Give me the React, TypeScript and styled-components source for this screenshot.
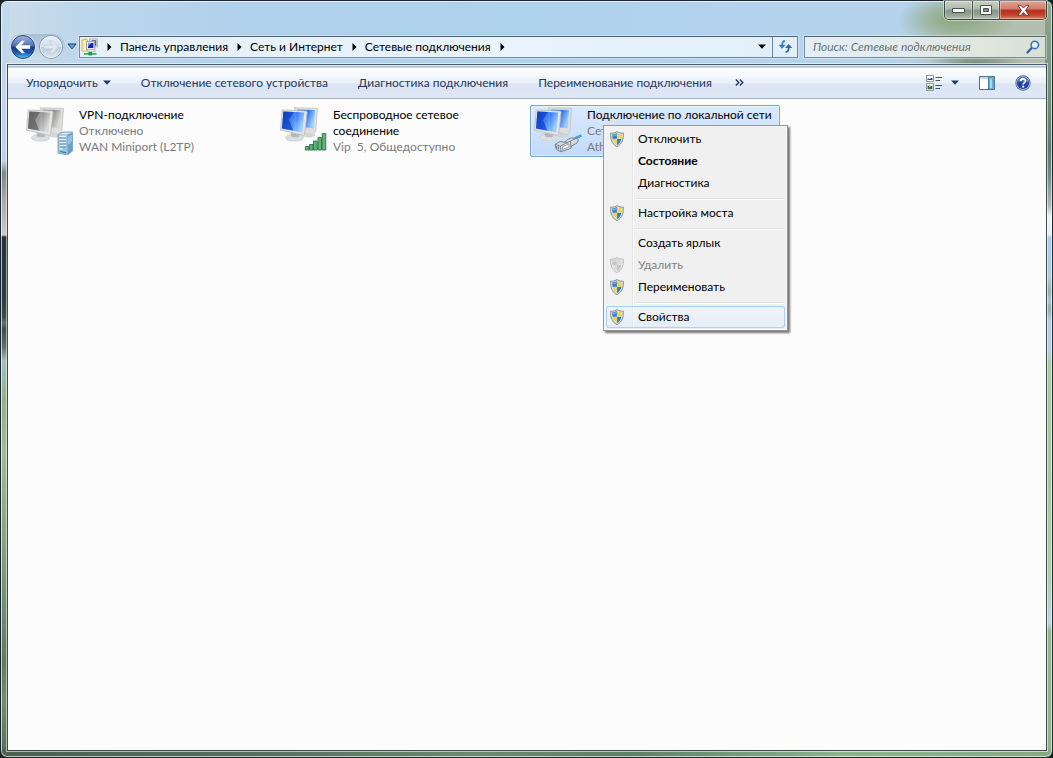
import React from 'react';
import styled, { createGlobalStyle, css } from 'styled-components';

const GlobalStyle = createGlobalStyle`
  * { box-sizing: border-box; }
  body {
    margin: 0;
    background: #1a2620;
    font-family: Lato, 'Open Sans', sans-serif;
    font-size: 12px;
    line-height: 16px;
    color: #000;
  }
  button, input { font: inherit; color: inherit; }
  button { margin: 0; padding: 0; border: 0; background: none; white-space: nowrap; }
  svg { display: block; flex: none; }
`;

/* ---------- window frame ---------- */

const Frame = styled.div`
  display: flex;
  flex-direction: column;
  min-height: 100vh;
  padding: 0 5px 6px 6px;
  border: 1px solid #1b2631;
  border-radius: 7px;
  box-shadow: inset 0 0 0 1px rgba(255, 255, 255, 0.65);
  background:
    linear-gradient(90deg, #4a6152, #55705f 25%, #6b8a70 45%, #5f8068 60%, #8fb48c 80%, #86a982) left bottom / 100% 8px no-repeat,
    linear-gradient(180deg, #c3d9ec 0, #bcd3ea 160px, #7c8b86 172px, #a9a9aa 200px, #cbc8c9 234px, #25333a 236px, #2c3c3f 300px,
      #3b4d49 316px, #5c7268 322px, #3a4d45 328px, #5a7268 346px, #a3c1bd 360px, #8fb28c 400px, #9dbd93 450px, #7f9f7c 560px,
      #5f7b64 660px, #6f8f74 700px, #536f5b 100%) left top / 8px 100% no-repeat,
    linear-gradient(180deg, #8fa791 0, #6f8f74 100px, #5f7b68 150px, #758b80 175px, #b0b9b8 205px, #eef3f5 215px, #e4f0f7 234px,
      #a9cbe6 236px, #accce4 275px, #8fb5a4 290px, #a5c8d4 300px, #8aaea6 308px, #b2cfe3 320px, #b0cfe3 350px, #a5cba9 362px,
      #a2c99c 480px, #a8cfae 580px, #b5d6dc 622px, #8fb98a 630px, #8cb487 100%) right top / 7px 100% no-repeat,
    radial-gradient(ellipse 50px 20px at calc(100% - 76px) 66px, rgba(91, 116, 101, 0.8), rgba(91, 116, 101, 0) 100%) left top / 100% 64px no-repeat,
    radial-gradient(ellipse 60px 26px at calc(100% - 95px) 18px, #8fab88 20%, rgba(151, 181, 146, 0) 100%) left top / 100% 64px no-repeat,
    radial-gradient(ellipse 150px 80px at calc(100% - 10px) 44px, #b3bfae 45%, rgba(175, 195, 183, 0) 100%) left top / 100% 64px no-repeat,
    linear-gradient(90deg, #c9dcea 0, #bcd6ec 90px, #b0d1ec 240px, #add2ec 520px, #b4d3ee 760px, #b5d3ea 100%);
`;

const TitleBar = styled.header`
  display: flex;
  justify-content: flex-end;
  height: 34px;
`;

const Caption = styled.div`
  display: flex;
  height: 19px;
  border: 1px solid #3b4541;
  border-top: 0;
  border-radius: 0 0 5px 5px;
  overflow: hidden;
  box-shadow: 0 0 0 1px rgba(255, 255, 255, 0.45);
`;

const CaptionButton = styled.button<{ $close?: boolean }>`
  display: flex;
  align-items: center;
  justify-content: center;
  width: ${(p) => (p.$close ? 47 : 27)}px;
  box-shadow: inset 0 0 0 1px rgba(255, 255, 255, 0.35);
  background: ${(p) =>
    p.$close
      ? 'linear-gradient(#dfa593 0, #d27a68 45%, #b52f1f 50%, #c23e29 75%, #dd7e5c 100%)'
      : 'linear-gradient(#c9d2c6 0, #acb8aa 45%, #86948a 50%, #93a192 75%, #b6c3b4 100%)'};
  & + & { border-left: 1px solid #4b5650; }
`;

const NavRow = styled.nav`
  display: flex;
  align-items: center;
  height: 23px;
  padding: 0 1px 0 2px;
`;

const History = styled.div`
  display: flex;
  align-items: center;
  gap: 2px;
  height: 26px;
  padding: 0 1px;
  border-radius: 13px;
  background: linear-gradient(rgba(150, 172, 194, 0.6), rgba(225, 237, 248, 0.3));
`;

const RoundButton = styled.button`
  width: 26px;
  height: 26px;
`;

const HistoryMenu = styled.button`
  display: flex;
  justify-content: center;
  width: 14px;
`;

const Address = styled.div`
  display: flex;
  flex: 1;
  align-items: center;
  height: 22px;
  border: 1px solid #73879d;
  border-top-color: #4f6276;
  background: linear-gradient(90deg, #e6f0f9, #e8f3fc 60%, #e2eff9);
  box-shadow: 0 0 0 1px rgba(255, 255, 255, 0.35);
`;

const Crumb = styled.button`
  display: flex;
  align-items: center;
  gap: 9px;
  padding-left: 8px;
`;

const CrumbRoot = styled(Crumb)`
  gap: 8px;
  padding-left: 1px;
`;

const AddressDrop = styled.button`
  display: flex;
  align-items: center;
  justify-content: center;
  width: 20px;
  height: 20px;
  margin-left: auto;
`;

const Refresh = styled(AddressDrop)`
  width: 25px;
  margin: 0;
  border-left: 1px solid #73879d;
`;

const Search = styled.label`
  display: flex;
  align-items: center;
  width: 242px;
  height: 22px;
  margin-left: 6px;
  padding: 0 5px 0 8px;
  border: 1px solid #7d8e92;
  border-top-color: #56676c;
  background: linear-gradient(90deg, #e3eff8 0, #e2ecee 40%, #dfe6de 75%, #d8dfd5 100%);
  box-shadow: 0 0 0 1px rgba(255, 255, 255, 0.35);
`;

const SearchInput = styled.input`
  flex: 1;
  min-width: 0;
  padding: 0;
  border: 0;
  outline: 0;
  background: none;
  font-style: italic;
  &::placeholder { color: #6c7271; opacity: 1; }
`;

/* ---------- client area ---------- */

const Client = styled.section`
  display: flex;
  flex: 1;
  flex-direction: column;
  margin-top: 6px;
  border: 1px solid #3a4d4a;
  border-top-color: #4b5f74;
  background: #fcfcfc;
  box-shadow: 0 0 0 1px rgba(255, 255, 255, 0.55);
`;

const Toolbar = styled.div`
  display: flex;
  align-items: center;
  height: 34px;
  padding: 2px 15px 0 3px;
  border-bottom: 1px solid #a0afc3;
  background: linear-gradient(#f4f9fd 0, #9fb0c4 2px, #fbfdff 3px, #f6f9fd 10px, #e8eff9 18px, #dbe5f3 19px, #dde7f5 100%);
  color: #1e395b;
`;

const ToolButton = styled.button`
  display: flex;
  align-items: center;
  gap: 5px;
  padding: 0 15px;
`;

const MoreButton = styled(ToolButton)`
  padding: 0 8px;
`;

const ToolIcons = styled.div`
  display: flex;
  align-items: center;
  gap: 20px;
  margin-left: auto;
`;

const ViewGroup = styled.div`
  display: flex;
  align-items: center;
  gap: 8px;
`;

const IconButton = styled.button`
  display: flex;
`;

const Items = styled.main`
  display: grid;
  grid-template-columns: repeat(auto-fill, 250px);
  gap: 4px;
  padding: 6px 14px;
`;

const Item = styled.article<{ $selected?: boolean }>`
  position: relative;
  display: flex;
  gap: 5px;
  min-height: 52px;
  padding: 1px 3px;
  border: 1px solid transparent;
  border-radius: 2px;
  ${(p) =>
    p.$selected &&
    css`
      border-color: #7da2ce;
      background: linear-gradient(#dbe9fc, #c1dbfc);
      box-shadow: inset 0 0 0 1px rgba(255, 255, 255, 0.4);
    `}
`;

const ItemText = styled.div`
  color: #7a7a7a;
`;

const ItemName = styled.h2`
  margin: 0;
  color: #000;
  font-size: 12px;
  font-weight: 400;
`;

const ItemLine = styled.p`
  margin: 0;
  white-space: pre;
`;

/* ---------- context menu ---------- */

const Menu = styled.div`
  position: absolute;
  left: 72px;
  top: 19px;
  z-index: 1;
  width: 185px;
  padding: 2px;
  border: 1px solid #979797;
  background: linear-gradient(90deg, #f1f1f1 28px, #e2e3e3 28px, #e2e3e3 29px, #fff 29px, #fff 30px, #f0f0f0 30px);
  box-shadow: inset 0 0 0 1px #f5f5f5, 2px 2px 2px rgba(0, 0, 0, 0.55);
`;

const MenuItem = styled.button<{ $bold?: boolean; $hot?: boolean }>`
  display: grid;
  grid-template-columns: 22px 1fr;
  gap: 10px;
  align-items: center;
  justify-items: start;
  width: 100%;
  height: 22px;
  font-weight: ${(p) => (p.$bold ? 700 : 400)};
  &:disabled { color: #838383; }
  ${(p) =>
    p.$hot &&
    css`
      border-radius: 3px;
      background: linear-gradient(rgba(240, 246, 253, 0.6), rgba(222, 235, 250, 0.6));
      box-shadow: inset 0 0 0 1px #aecff7;
    `}
`;

const IconSlot = styled.span`
  display: flex;
  justify-content: center;
  width: 22px;
`;

const Separator = styled.hr`
  height: 2px;
  margin: 4px 1px 2px 29px;
  border: 0;
  border-top: 1px solid #e0e0e0;
  background: #fff;
`;

/* ---------- icons ---------- */

const DownArrow = ({ color = '#1e395b' }: { color?: string }) => (
  <svg width="8" height="5" viewBox="0 0 8 5">
    <path d="M0 .5h8L4 4.8z" fill={color} />
  </svg>
);

const HistoryArrow = () => (
  <svg width="10" height="7" viewBox="0 0 10 7">
    <path d="M1 1h8L5 5.800z" fill="#5fa6dc" stroke="#173f70" strokeLinejoin="round" />
  </svg>
);

const RightArrow = () => (
  <svg width="5" height="8" viewBox="0 0 5 8">
    <path d="M.5 0L4.5 4L.5 8z" fill="#000" />
  </svg>
);

const BackIcon = () => (
  <svg width="26" height="26" viewBox="0 0 26 26">
    <defs>
      <linearGradient id="backBase" x1="0" y1="0" x2="0" y2="1">
        <stop offset="0" stopColor="#9db6de" />
        <stop offset=".46" stopColor="#4a70b8" />
        <stop offset=".5" stopColor="#143a88" />
        <stop offset=".75" stopColor="#1d58ae" />
        <stop offset="1" stopColor="#5ccbf5" />
      </linearGradient>
    </defs>
    <circle cx="13" cy="13" r="12.5" fill="#eef5fb" opacity=".8" />
    <circle cx="13" cy="13" r="11.5" fill="url(#backBase)" stroke="#2b4470" />
    <path d="M5.400 13l6.200-6.200h3.400l-3.600 4.400h8.800v3.600h-8.800l3.600 4.400h-3.400z" fill="#fff" />
  </svg>
);

const ForwardIcon = () => (
  <svg width="26" height="26" viewBox="0 0 26 26">
    <defs>
      <linearGradient id="fwdBase" x1="0" y1="0" x2="0" y2="1">
        <stop offset="0" stopColor="#e9f0f7" />
        <stop offset=".48" stopColor="#d3dfea" />
        <stop offset=".52" stopColor="#b9cada" />
        <stop offset="1" stopColor="#dde8f1" />
      </linearGradient>
    </defs>
    <circle cx="13" cy="13" r="11.5" fill="url(#fwdBase)" stroke="#8296ac" />
    <circle cx="13" cy="13" r="10.5" fill="none" stroke="#f4f8fb" strokeOpacity=".8" />
    <path d="M20.600 13l-6.200-6.200H11l3.600 4.400H5.800v3.600h8.800L11 19.200h3.400z" fill="#dfe8f0" stroke="#bccbd9" strokeWidth=".6" />
  </svg>
);

const NetworkFolderIcon = () => (
  <svg width="18" height="18" viewBox="0 0 18 18">
    <path d="M1 2l4-1 1.500 1V13H1z" fill="#f4df86" stroke="#c4aa52" strokeWidth=".8" />
    <path d="M2 3l3-.8V12.500H2z" fill="#fbeeb0" />
    <path d="M8.500.9h8v8h-8z" fill="#f1eec0" stroke="#a6aaa8" strokeWidth=".8" />
    <path d="M10.500 2.300h4.800v5.400h-4.800z" fill="#3450c4" />
    <path d="M5.500 3.500h8.300v8.300H5.500z" fill="#e6eaf0" stroke="#8b95a8" strokeWidth=".8" />
    <path d="M7 5h5.400v5H7z" fill="#1528a4" />
    <path d="M7 5h3.400L7 8.600z" fill="#7c9cf0" />
    <path d="M6.500 11.800h7l1.200 1.700H6z" fill="#e9ecef" stroke="#a5adb5" strokeWidth=".5" />
    <path d="M3 15h12.500v1.800H3z" fill="#35b765" />
    <path d="M7.500 13.800h3.600v3.600H7.500z" fill="#1f9a4c" />
  </svg>
);

const RefreshIcon = () => (
  <svg width="15" height="13" viewBox="0 0 15 13">
    <path d="M7 1C4.800 1 4.200 2.400 4.200 5.400" fill="none" stroke="#4389c8" strokeWidth="1.800" />
    <path d="M.6 4.800h7L4.100 8.800z" fill="#3276bb" />
    <path d="M7.600 12c2.400 0 3.100-1.400 3.100-4.800" fill="none" stroke="#2a68ae" strokeWidth="1.800" />
    <path d="M7.200 8H14.200L10.700 4z" fill="#2465ac" />
  </svg>
);

const SearchIcon = () => (
  <svg width="14" height="14" viewBox="0 0 14 14">
    <path d="M1.400 12.400l4.200-4.400" stroke="#2d62a8" strokeWidth="2.200" strokeLinecap="round" />
    <circle cx="8.800" cy="4.900" r="3.700" fill="#e6f1f8" stroke="#3b76b8" strokeWidth="1.600" />
  </svg>
);

const ViewIcon = () => (
  <svg width="17" height="16" viewBox="0 0 17 16">
    <path d="M.5.5h7v6h-7z" fill="#fff" stroke="#8796a8" />
    <path d="M1.500 5V3.400h1.600v.7h1.400v-1H6.500V5z" fill="#2a4f8c" />
    <path d="M.5 8.500h7v7h-7z" fill="#fff" stroke="#8796a8" />
    <path d="M1.500 10.500h1.800v1.400h1v-1h2.200v3.300h-5z" fill="#496a3c" />
    <path d="M3 10h1.500v1.500H3z" fill="#e2c04a" />
    <path d="M9.500 2.500h6.500M9.500 5.500h4.500M9.500 10.500h6.500M9.500 13.500h4.500" stroke="#3e5672" fill="none" />
  </svg>
);

const PaneIcon = () => (
  <svg width="16" height="14" viewBox="0 0 16 14">
    <path d="M.5.5h15v13H.5z" fill="#fff" stroke="#58718d" />
    <path d="M1 1h14v2H1z" fill="#c7d5e4" />
    <path d="M9.500 1h5.500v12H9.500z" fill="#5fb1cf" />
    <path d="M11 3h2v9h-2z" fill="#a4dbec" />
    <path d="M9.500 1v12" stroke="#4c7f9d" />
  </svg>
);

const HelpIcon = () => (
  <svg width="16" height="16" viewBox="0 0 16 16">
    <circle cx="8" cy="8" r="7.700" fill="#5b6f9c" />
    <circle cx="8" cy="8" r="6.800" fill="#b9c6e4" />
    <circle cx="8" cy="8" r="6.100" fill="#2443a6" />
    <path d="M2.800 7a5.200 5.200 0 0 1 10.400 0c-3-1-7.400-1-10.400 0z" fill="#5f80d2" />
    <path d="M5.700 6.200c0-3.200 4.800-3 4.800-.3 0 1.700-2.300 1.700-2.300 3.500" fill="none" stroke="#fff" strokeWidth="1.700" />
    <circle cx="8.200" cy="11.700" r="1.100" fill="#fff" />
  </svg>
);

const ShieldIcon = ({ off }: { off?: boolean }) => {
  const blue = off ? '#c4c4c4' : '#2f7fc6';
  const yellow = off ? '#dadada' : '#f3d34c';
  return (
    <svg width="14" height="16" viewBox="0 0 14 16">
      <path
        d="M7 .5C5.200 1.800 3 2.300.6 2.200.3 7.800 1.500 13 7 15.600 12.500 13 13.700 7.800 13.400 2.200 11 2.300 8.800 1.800 7 .5z"
        fill={off ? '#e6e6e6' : '#d3dadd'}
        stroke={off ? '#b9b9b9' : '#858d90'}
        strokeWidth=".9"
      />
      <path d="M6.900 2.100C5.500 3 3.900 3.400 2.200 3.500c0 1.500.1 3 .4 4.300h4.300z" fill={blue} />
      <path d="M7.100 2.100c1.400.9 3 1.300 4.700 1.400 0 1.500-.1 3-.4 4.300H7.100z" fill={yellow} />
      <path d="M6.900 8H2.700c.6 2.700 1.800 4.800 4.200 6.100z" fill={yellow} />
      <path d="M7.100 8h4.200c-.6 2.700-1.800 4.800-4.200 6.100z" fill={blue} />
      <path d="M2.600 3.900c1.600-.1 3-.5 4.200-1.300v1.800C5.400 5 4 5.400 2.700 5.600z" fill="#fff" opacity=".35" />
    </svg>
  );
};

type Overlay = 'server' | 'signal' | 'plug';

const ConnectionIcon = ({ overlay, off }: { overlay: Overlay; off?: boolean }) => {
  const id = `screen-${overlay}`;
  return (
    <svg width="48" height="48" viewBox="0 0 48 48">
      <defs>
        <linearGradient id={id} x1="0" y1="0" x2="1" y2=".4">
          <stop offset="0" stopColor={off ? '#6e6e6e' : '#0a45cf'} />
          <stop offset=".55" stopColor={off ? '#8f8f8f' : '#2a72ee'} />
          <stop offset="1" stopColor={off ? '#d8d8d8' : '#9fd0ff'} />
        </linearGradient>
        <linearGradient id={`${id}-stand`} x1="0" y1="0" x2="0" y2="1">
          <stop offset="0" stopColor="#bfc1c3" />
          <stop offset="1" stopColor="#ededed" />
        </linearGradient>
      </defs>
      {/* rear monitor */}
      <path d="M14 .8l23.500.5-1.700 23-3 3.500-8-2z" fill="#dededc" stroke="#c3c4c3" strokeWidth=".8" />
      <path d="M17 2.800l18 .2-1.400 18.200-8.600-.6z" fill={`url(#${id})`} />
      <path d="M24 26l9 2.200 2-1.400v2.400l-6 1.600-7-1.600z" fill="#d4d5d5" />
      {/* front monitor */}
      <ellipse cx="14.500" cy="31" rx="9" ry="3.600" fill={`url(#${id}-stand)`} />
      <ellipse cx="14.500" cy="30.600" rx="9" ry="3.400" fill="#dedfe0" stroke="#cbccce" strokeWidth=".7" />
      <path d="M11 24h7.500l.6 5.400c-2 1.400-6 1.200-8.400-.2z" fill="#b4b7ba" />
      <path d="M2.200 3l23.600.9 1.400.8-2.600 22.800-1.200.9L.6 23.200z" fill="#e6e5e2" stroke="#b9bab9" strokeWidth=".8" />
      <path d="M3.400 4.600l21 .9-2.200 20L2 21.400z" fill={`url(#${id})`} />
      <path d="M3.400 4.600l10.600.4-5 8 4.500 10.800L2 21.400z" fill={off ? '#505050' : '#0a34b4'} opacity=".45" />
      <path d="M14 5l-5 8 4.500 10.800 2.600.5V5z" fill="#fff" opacity=".14" />

      {overlay === 'server' && (
        <g>
          <path d="M32 27.500l5-2.500h9.500v19L41.500 48 32 46z" fill="#9cc3de" stroke="#6b9cc2" strokeWidth=".8" />
          <path d="M41.500 27.300l4.700-1.700V43.800l-4.700 3.600z" fill="#6a9fc8" />
          <path d="M42 29l4-1.200v7L42 38z" fill="#a9cde6" opacity=".7" />
          <path d="M33 27.500l4.500-1.800h8l-4.300 1.500z" fill="#dcebf5" />
          <path d="M33.500 29.500h6.500M33.500 32.500h6.500M33.500 35.500h6.500M33.500 38.500h6.500M33.500 41.500l3 .3" stroke="#f1f8fc" strokeWidth="1.300" />
          <path d="M33.500 31h6.500M33.500 34h6.500M33.500 37h6.500M33.500 40h6.500" stroke="#4d83b0" strokeWidth=".8" />
          <path d="M34 44.500l6 1.200" stroke="#3f76a6" strokeWidth="1.200" />
        </g>
      )}
      {overlay === 'signal' && (
        <g fill="#66b07c" stroke="#2b7446" strokeWidth=".9">
          <path d="M25.500 39.500h3.500v3.500h-3.500z" />
          <path d="M29.500 37.500h3.500v5.500h-3.500z" />
          <path d="M33.500 34h3.700v9h-3.700z" />
          <path d="M38 30.500h3.500V43H38z" />
          <path d="M42.200 26.500h3.600V43h-3.600z" />
        </g>
      )}
      {overlay === 'plug' && (
        <g strokeLinejoin="round">
          <path d="M39.500 33c2.500-2.600 4.500-3.500 8-4.500" fill="none" stroke="#49a3d6" strokeWidth="2.600" />
          <path d="M21 37.500l5-3 4.500.6 5.500-4.100 6 .2 2.500 1.500-1.500 3.300-5.500 3-1 2.500-9.500 3.300-4.500-2.300z" fill="#d3dade" stroke="#737c83" strokeWidth=".9" />
          <path d="M21 37.500l5.500 1.500 10-5 5.500-2.500M26.500 39l.5 5.500M36.500 34l.6 6.500M30.500 35.100l3.500 1" fill="none" stroke="#737c83" strokeWidth=".8" />
          <path d="M22.600 39v2.600M24.500 39.500v3" stroke="#59636a" strokeWidth=".8" />
          <path d="M28.500 39.800l6.500-3v3l-6.300 2.700z" fill="#f6f8f9" stroke="#7f898f" strokeWidth=".7" />
        </g>
      )}
    </svg>
  );
};

const MinimizeIcon = () => (
  <svg width="13" height="5" viewBox="0 0 13 5">
    <path d="M.5.500h12v4H.5z" fill="#fff" stroke="#4c5550" />
  </svg>
);

const MaximizeIcon = () => (
  <svg width="12" height="10" viewBox="0 0 12 10">
    <path d="M.5.500h11v9H.5z" fill="#fff" stroke="#4c5550" />
    <path d="M3.500 3.500h5v3h-5z" fill="#7d8d80" stroke="#4c5550" />
  </svg>
);

const CloseIcon = () => (
  <svg width="13" height="11" viewBox="0 0 13 11">
    <path
      d="M1 .6h3.300l2.200 2.500L8.700.6H12L8.500 5.400l3.600 4.900H8.800L6.500 7.600l-2.300 2.700H.9l3.600-4.900z"
      fill="#fff"
      stroke="#66332c"
      strokeWidth=".9"
    />
  </svg>
);

const MoreIcon = () => (
  <svg width="9" height="7" viewBox="0 0 9 7">
    <path d="M.8.500l3 3-3 3M4.800.500l3 3-3 3" fill="none" stroke="#1e395b" strokeWidth="1.400" />
  </svg>
);

/* ---------- page ---------- */

const crumbs = ['Панель управления', 'Сеть и Интернет', 'Сетевые подключения'];
const commands = ['Отключение сетевого устройства', 'Диагностика подключения', 'Переименование подключения'];

interface Entry {
  label: string;
  shield?: boolean;
  bold?: boolean;
  disabled?: boolean;
  hot?: boolean;
}

const menuGroups: Entry[][] = [
  [{ label: 'Отключить', shield: true }, { label: 'Состояние', bold: true }, { label: 'Диагностика' }],
  [{ label: 'Настройка моста', shield: true }],
  [
    { label: 'Создать ярлык' },
    { label: 'Удалить', shield: true, disabled: true },
    { label: 'Переименовать', shield: true },
  ],
  [{ label: 'Свойства', shield: true, hot: true }],
];

const ContextMenu = () => (
  <Menu role="menu">
    {menuGroups.map((group, i) => (
      <React.Fragment key={i}>
        {i > 0 && <Separator />}
        {group.map((e) => (
          <MenuItem key={e.label} role="menuitem" $bold={e.bold} $hot={e.hot} disabled={e.disabled}>
            <IconSlot>{e.shield && <ShieldIcon off={e.disabled} />}</IconSlot>
            {e.label}
          </MenuItem>
        ))}
      </React.Fragment>
    ))}
  </Menu>
);

export default function App() {
  return (
    <>
      <GlobalStyle />
      <Frame>
        <TitleBar>
          <Caption>
            <CaptionButton aria-label="Свернуть"><MinimizeIcon /></CaptionButton>
            <CaptionButton aria-label="Развернуть"><MaximizeIcon /></CaptionButton>
            <CaptionButton aria-label="Закрыть" $close><CloseIcon /></CaptionButton>
          </Caption>
        </TitleBar>

        <NavRow>
          <History>
            <RoundButton aria-label="Назад"><BackIcon /></RoundButton>
            <RoundButton aria-label="Вперед"><ForwardIcon /></RoundButton>
          </History>
          <HistoryMenu aria-label="Последние страницы"><HistoryArrow /></HistoryMenu>
          <Address>
            <CrumbRoot aria-label="Сеть"><NetworkFolderIcon /><RightArrow /></CrumbRoot>
            {crumbs.map((c) => (
              <Crumb key={c}>{c}<RightArrow /></Crumb>
            ))}
            <AddressDrop aria-label="Предыдущие расположения"><DownArrow color="#000" /></AddressDrop>
            <Refresh aria-label="Обновить"><RefreshIcon /></Refresh>
          </Address>
          <Search>
            <SearchInput type="text" aria-label="Поиск" placeholder="Поиск: Сетевые подключения" />
            <SearchIcon />
          </Search>
        </NavRow>

        <Client>
          <Toolbar>
            <ToolButton>Упорядочить<DownArrow /></ToolButton>
            {commands.map((c) => (
              <ToolButton key={c}>{c}</ToolButton>
            ))}
            <MoreButton aria-label="Дополнительные команды"><MoreIcon /></MoreButton>
            <ToolIcons>
              <ViewGroup>
                <IconButton aria-label="Вид"><ViewIcon /></IconButton>
                <IconButton aria-label="Другие виды"><DownArrow /></IconButton>
              </ViewGroup>
              <IconButton aria-label="Область просмотра"><PaneIcon /></IconButton>
              <IconButton aria-label="Справка"><HelpIcon /></IconButton>
            </ToolIcons>
          </Toolbar>

          <Items>
            <Item>
              <ConnectionIcon overlay="server" off />
              <ItemText>
                <ItemName>VPN-подключение</ItemName>
                <ItemLine>Отключено</ItemLine>
                <ItemLine>WAN Miniport (L2TP)</ItemLine>
              </ItemText>
            </Item>
            <Item>
              <ConnectionIcon overlay="signal" />
              <ItemText>
                <ItemName>Беспроводное сетевое соединение</ItemName>
                <ItemLine>Vip  5, Общедоступно</ItemLine>
              </ItemText>
            </Item>
            <Item $selected>
              <ConnectionIcon overlay="plug" />
              <ItemText>
                <ItemName>Подключение по локальной сети</ItemName>
                <ItemLine>Сет</ItemLine>
                <ItemLine>Ath</ItemLine>
              </ItemText>
              <ContextMenu />
            </Item>
          </Items>
        </Client>
      </Frame>
    </>
  );
}
